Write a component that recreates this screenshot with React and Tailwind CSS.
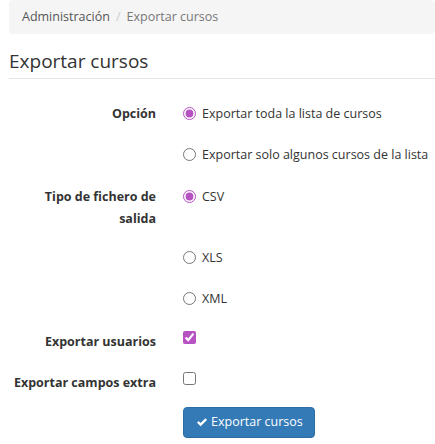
export default function App() {
  const font = { fontFamily: '"Open Sans", sans-serif' }
  return (
    <div className="w-[435px] h-[444px] bg-white text-[#333] text-[12.5px] pl-[9px] overflow-hidden whitespace-nowrap" style={font}>
      <div className="h-[34px] bg-[#f5f5f5] rounded-[4px] flex items-center pl-[13px]">
        <span className="text-[#555]">Administración</span>
        <span className="text-[#ccc] px-[6px]">/</span>
        <span className="text-[#777]">Exportar cursos</span>
      </div>

      <h2 className="mt-[14px] text-[19px] leading-[27px] text-[#333] pb-[3px] border-b border-[#e5e5e5]">Exportar cursos</h2>

      <div className="mt-[24px]">
        <Row label="Opción" h="h-[41px]">
          <Radio checked label="Exportar toda la lista de cursos" />
        </Row>
        <Row h="h-[42px]">
          <Radio label="Exportar solo algunos cursos de la lista" />
        </Row>
        <Row label={<>Tipo de fichero de<br />salida</>} h="h-[61px]">
          <Radio checked label="CSV" />
        </Row>
        <Row h="h-[41px]">
          <Radio label="XLS" />
        </Row>
        <Row h="h-[43px]">
          <Radio label="XML" />
        </Row>
        <Row label="Exportar usuarios" h="h-[41px]">
          <Check checked />
        </Row>
        <Row label="Exportar campos extra" h="h-[35px]">
          <Check />
        </Row>
        <div className="pl-[174px]">
          <button className="h-[31px] pl-[12px] pr-[11px] bg-[#337ab7] border border-[#2e6da4] rounded-[4px] text-white text-[12.5px] flex items-center gap-[3px]">
            <svg width="12" height="11" viewBox="0 0 12 10" fill="white">
              <path d="M1 5.2 L2.6 3.6 L4.6 5.6 L9.4 0.8 L11 2.4 L4.6 8.8 Z" />
            </svg>
            Exportar cursos
          </button>
        </div>
      </div>
    </div>
  )
}

function Row({ label, h, children }) {
  return (
    <div className={`flex ${h}`}>
      <div className="w-[147px] shrink-0 text-right font-bold leading-[22px]">{label}</div>
      <div className="pl-[27px]">{children}</div>
    </div>
  )
}

function Radio({ checked, label }) {
  return (
    <label className="flex items-center h-[22px] gap-[6px]">
      <input type="radio" defaultChecked={checked} className="m-0 w-[13px] h-[13px] accent-[#b652c2] -mt-[2px]" />
      <span>{label}</span>
    </label>
  )
}

function Check({ checked }) {
  return (
    <input type="checkbox" defaultChecked={checked} className="m-0 w-[13px] h-[13px] accent-[#b652c2]" />
  )
}
